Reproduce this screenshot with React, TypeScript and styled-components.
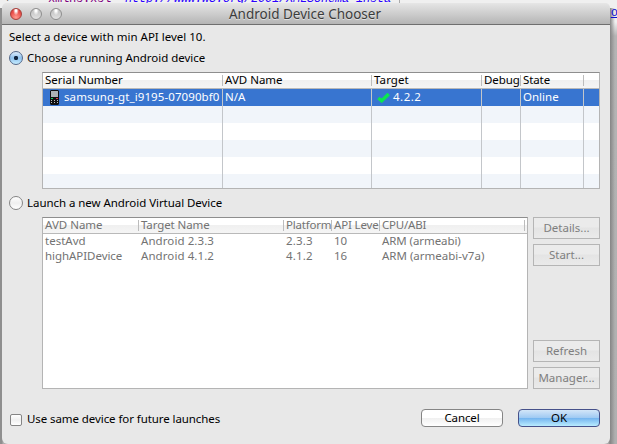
import React from "react";
import styled, { createGlobalStyle, css } from "styled-components";

const Global = createGlobalStyle`
  * { box-sizing: border-box; }
  body { margin: 0; overflow: hidden; }
  #root { width: 617px; height: 444px; }
`;

const Desktop = styled.div`
  position: relative;
  width: 617px;
  height: 444px;
  padding: 3px 0 0 2px;
  overflow: hidden;
  background: #b0b0b0;
  font: 11.5px/16px "Noto Sans", sans-serif;
  color: #000;
`;
const Editor = styled.div`
  position: absolute;
  inset: 0 0 auto 0;
  height: 444px;
  background: linear-gradient(90deg, #8f8f8f 0 2px, transparent 3px 608px, #858585 610px, transparent 615px) 0 8px no-repeat,
    linear-gradient(#f0f0f0 0 22px, #b4b4b4 36px, #b0b0b0 100%);
`;
const CodeLine = styled.div`
  position: absolute;
  left: 0;
  top: -8px;
  width: 400px;
  height: 20px;
  padding-left: 4px;
  display: flex;
  border-right: 1px solid #aaa;
  white-space: nowrap;
  font: 12px/14px "Liberation Mono", monospace;
  letter-spacing: -0.2px;
  color: #7f007f;
  i { color: #2a00ff; }
`;
const FoldMark = styled.span`
  width: 44px;
  color: #555;
`;
const EdgeLink = styled.span`
  position: absolute;
  right: -1px;
  top: 6px;
  font: 12px/15px "Liberation Mono", monospace;
  color: #1010d0;
  text-decoration: underline;
`;
const Dialog = styled.main`
  position: relative;
  width: 608px;
  height: 441px;
  border-radius: 5px 5px 6px 6px;
  background: #e8e8e8;
  display: flex;
  flex-direction: column;
  overflow: hidden;
`;
const TitleBar = styled.header`
  height: 22px;
  flex: none;
  display: grid;
  grid-template-columns: 70px 1fr 70px;
  align-items: center;
  border-bottom: 1px solid #6f6f6f;
  background: linear-gradient(#e6e6e6, #b5b5b5);
`;
const Lights = styled.div`
  display: flex;
  gap: 8px;
  padding-left: 8px;
`;
const Light = styled.span<{ $red?: boolean }>`
  width: 12px;
  height: 12px;
  border-radius: 50%;
  border: 1px solid ${(p) => (p.$red ? "#a5403c" : "#8e8e8e")};
  background: ${(p) =>
    p.$red
      ? "radial-gradient(ellipse at 50% 15%, #fff 0 10%, transparent 40%), radial-gradient(circle at 50% 85%, #ff9c90, #ea4f4a 60%, #cf3430)"
      : "radial-gradient(ellipse at 50% 15%, #fff 0 10%, transparent 40%), linear-gradient(#bdbdbd, #e2e2e2)"};
`;
const Title = styled.h1`
  margin: 0;
  padding-right: 2px;
  text-align: center;
  font-size: 13.5px;
  line-height: 20px;
  font-weight: 400;
  color: #3c3c3c;
  white-space: nowrap;
  text-shadow: 0 1px 0 #e0e0e0;
`;
const Text = styled.span<{ $ls?: number }>`
  white-space: nowrap;
  letter-spacing: ${(p) => p.$ls ?? 0}px;
`;
const Content = styled.div`
  flex: 1;
  padding: 4px 10px 0 7px;
  display: flex;
  flex-direction: column;
`;
const Intro = styled.div`
  height: 16px;
`;
const Option = styled.label<{ $mt: number }>`
  display: flex;
  align-items: center;
  gap: 4px;
  height: 16px;
  margin-top: ${(p) => p.$mt}px;
`;
const Radio = styled.span<{ $on?: boolean }>`
  width: 14px;
  height: 14px;
  border-radius: 50%;
  border: 1px solid ${(p) => (p.$on ? "#54688a" : "#858585")};
  background: ${(p) =>
    p.$on
      ? "radial-gradient(circle, #12263f 0 1.8px, transparent 2.5px), linear-gradient(#dcebfa, #8fc2ee 50%, #c5ecff)"
      : "linear-gradient(#fff, #efefef 50%, #fff)"};
`;
const Check = styled.span`
  width: 12px;
  height: 12px;
  margin: 2px 1px 0;
  border-radius: 2px;
  border: 1px solid #858585;
  background: linear-gradient(#fff, #f0f0f0 50%, #fff);
`;
const Table = styled.section<{ $w: number; $h: number; $cols: string; $dim?: boolean }>`
  width: ${(p) => p.$w}px;
  height: ${(p) => p.$h}px;
  border: 1px solid #b4b4b4;
  border-top-color: #8e8e8e;
  overflow: hidden;
  line-height: 14px;
  color: ${(p) => (p.$dim ? "#737373" : "#000")};
  background: #fff;
  --cols: ${(p) => p.$cols};
`;
const HeadRow = styled.div`
  display: grid;
  grid-template-columns: var(--cols);
  height: 16px;
  border-bottom: 1px solid #b9b9b9;
  background: linear-gradient(#fff 0 45%, #f0f0f0 50%, #f5f5f5);
`;
const HeadCell = styled.div<{ $last?: boolean }>`
  height: 11px;
  margin-top: 2px;
  padding: 0 0 2px 2px;
  display: flex;
  align-items: center;
  white-space: nowrap;
  border-right: ${(p) => (p.$last ? "0" : "1px solid #bcbcbc")};
`;
const Row = styled.div<{ $kind?: "sel" | "tint"; $h: number; $lines?: boolean }>`
  display: grid;
  grid-template-columns: var(--cols);
  height: ${(p) => p.$h}px;
  ${(p) => p.$kind === "sel" && css`background: #3875d0; color: #fff;`}
  ${(p) => p.$kind === "tint" && css`background: #f1f5fa;`}
  > div { border-right: ${(p) => (p.$lines ? "1px solid #c3c6ca" : "0")}; }
  > div:last-child { border-right: 0; }
`;
const Cell = styled.div`
  display: flex;
  align-items: center;
  padding: 0 0 1px 2px;
  white-space: nowrap;
  overflow: hidden;
`;
const Phone = styled.svg`
  width: 9px;
  height: 15px;
  margin: 1px 5px 0 5px;
  flex: none;
`;
const Tick = styled.svg`
  width: 13px;
  height: 11px;
  margin: 1px 3px 0 3px;
  flex: none;
`;
const Lower = styled.div`
  display: flex;
  gap: 5px;
  margin: 6px 0 0 33px;
`;
const SideButtons = styled.div`
  display: flex;
  flex-direction: column;
  gap: 5px;
`;
const SquareButton = styled.button<{ $push?: boolean }>`
  width: 67px;
  height: 22px;
  padding: 0;
  margin-top: ${(p) => (p.$push ? 69 : 0)}px;
  border: 1px solid #b5b5b5;
  background: linear-gradient(#ebebeb 0 45%, #e4e4e4 50%, #eaeaea);
  font: inherit;
  color: #7f7f7f;
`;
const Footer = styled.footer`
  display: flex;
  align-items: center;
  justify-content: space-between;
  margin-top: 20px;
`;
const Actions = styled.div`
  display: flex;
  gap: 15px;
`;
const PushButton = styled.button<{ $primary?: boolean }>`
  width: 82px;
  height: 18px;
  padding: 0;
  border-radius: 4px;
  border: 1px solid ${(p) => (p.$primary ? "#46518a" : "#858585")};
  background: ${(p) =>
    p.$primary ? "linear-gradient(#d3e6f8, #a0caf3 48%, #75b5ef 52%, #b9ecff)" : "linear-gradient(#fff 0 48%, #f0f0f0 52%, #fff)"};
  font: inherit;
  line-height: 16px;
  letter-spacing: -0.1px;
  color: #000;
`;
const FirstTable = styled.div`
  margin: 6px 0 0 33px;
`;

type Item = [label: string, spacing: number];

const deviceHeads: Item[] = [["Serial Number", 0], ["AVD Name", 0], ["Target", 0.1], ["Debug", -0.1], ["State", -0.1], ["", 0]];
const avdHeads: Item[] = [["AVD Name", 0], ["Target Name", -0.1], ["Platform", -0.2], ["API Leve", -0.15], ["CPU/ABI", -0.2], ["", 0]];
const avds: Item[][] = [
  [["testAvd", 0], ["Android 2.3.3", 0.08], ["2.3.3", 0.2], ["10", 0], ["ARM (armeabi)", -0.08]],
  [["highAPIDevice", -0.05], ["Android 4.1.2", 0.08], ["4.1.2", 0.2], ["16", 0], ["ARM (armeabi-v7a)", 0]],
];

function Heads({ items }: { items: Item[] }) {
  return (
    <HeadRow>
      {items.map(([t, ls], i) => (
        <HeadCell key={i} $last={i === items.length - 1}><Text $ls={ls}>{t}</Text></HeadCell>
      ))}
    </HeadRow>
  );
}

export default function App() {
  return (
    <Desktop>
      <Global />
      <Editor>
        <CodeLine><FoldMark>+</FoldMark>xmlns:xsl=<i>"http://www.w3.org/2001/XMLSchema-insta</i></CodeLine>
        <EdgeLink>o</EdgeLink>
      </Editor>
      <Dialog>
        <TitleBar>
          <Lights><Light $red /><Light /><Light /></Lights>
          <Title>Android Device Chooser</Title>
        </TitleBar>
        <Content>
          <Intro><Text>Select a device with min API level 10.</Text></Intro>
          <Option $mt={5}><Radio $on /><Text $ls={-0.03}>Choose a running Android device</Text></Option>
          <FirstTable>
            <Table $w={558} $h={117} $cols="180px 149px 110px 39px 63px 1fr">
              <Heads items={deviceHeads} />
              <Row $kind="sel" $h={17} $lines>
                <Cell>
                  <Phone viewBox="0 0 9 15">
                    <path d="M1 0h7l1 1v13l-1 1H1l-1-1V1z" fill="#111" />
                    <path d="M1 1h7v6H1z" fill="#aeb3b5" />
                    <path d="M1 8h2v1H1z" fill="#19d35c" /><path d="M6 8h2v1H6z" fill="#e0384a" />
                    <path d="M1 10h1v1H1zM4 10h1v1H4zM7 10h1v1H7zM1 12h1v1H1zM4 12h1v1H4zM7 12h1v1H7z" fill="#bbb" />
                  </Phone>
                  <Text $ls={0.1}>samsung-gt_i9195-07090bf0</Text>
                </Cell>
                <Cell><Text>N/A</Text></Cell>
                <Cell>
                  <Tick viewBox="0 0 13 11"><path d="M1.3 6l3.4 2.8L11.7 2" fill="none" stroke="#0be650" strokeWidth="3.4" /></Tick>
                  <Text $ls={0.5}>4.2.2</Text>
                </Cell>
                <Cell /><Cell><Text>Online</Text></Cell><Cell />
              </Row>
              {[0, 1, 2, 3, 4].map((n) => (
                <Row key={n} $kind={n % 2 ? undefined : "tint"} $h={17} $lines>
                  <Cell /><Cell /><Cell /><Cell /><Cell /><Cell />
                </Row>
              ))}
            </Table>
          </FirstTable>
          <Option $mt={6}><Radio /><Text $ls={-0.05}>Launch a new Android Virtual Device</Text></Option>
          <Lower>
            <Table $w={486} $h={172} $cols="96px 145px 48px 48px 145px 1fr" $dim>
              <Heads items={avdHeads} />
              {avds.map((r, i) => (
                <Row key={i} $h={15}>{r.map(([t, ls], j) => <Cell key={j}><Text $ls={ls}>{t}</Text></Cell>)}</Row>
              ))}
            </Table>
            <SideButtons>
              <SquareButton>Details...</SquareButton>
              <SquareButton>Start...</SquareButton>
              <SquareButton $push>Refresh</SquareButton>
              <SquareButton>Manager...</SquareButton>
            </SideButtons>
          </Lower>
          <Footer>
            <Option $mt={2}><Check /><Text $ls={-0.08}>Use same device for future launches</Text></Option>
            <Actions><PushButton>Cancel</PushButton><PushButton $primary>OK</PushButton></Actions>
          </Footer>
        </Content>
      </Dialog>
    </Desktop>
  );
}
